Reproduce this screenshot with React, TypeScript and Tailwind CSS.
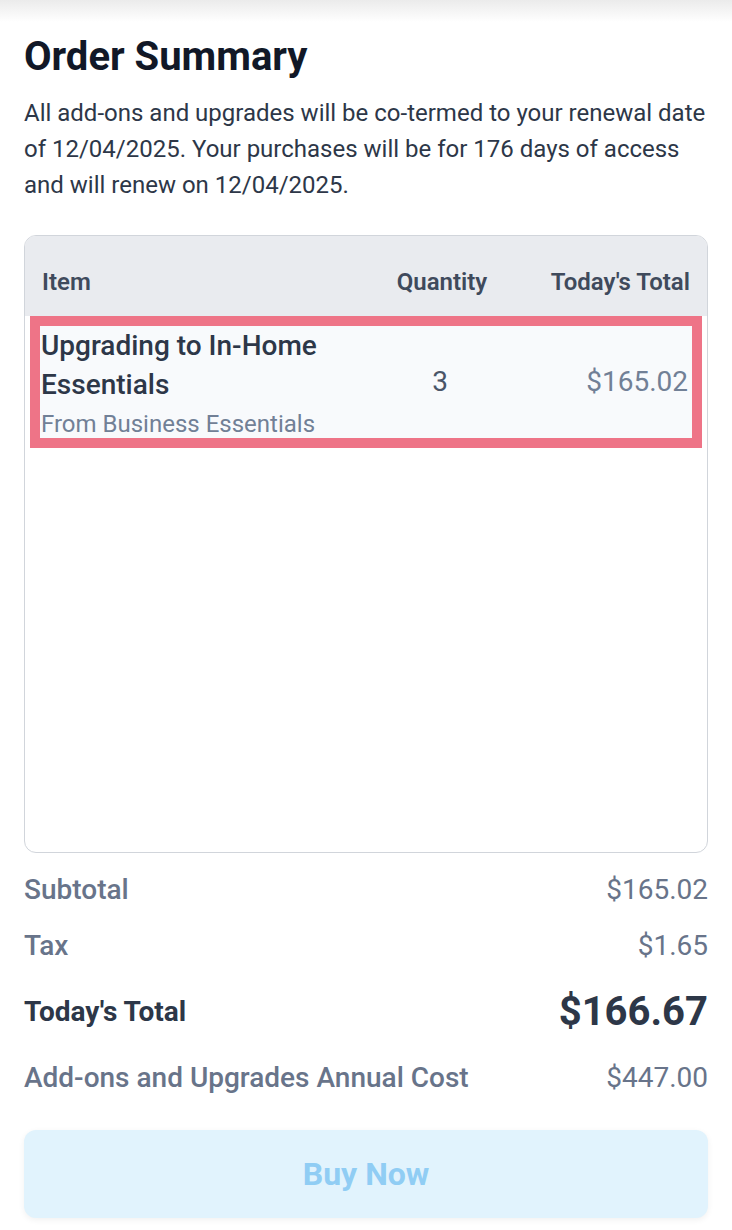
export default function App() {
  return (
    <div className="min-h-[1230px] bg-white font-['Roboto',sans-serif]">
      {/* header shadow from the page above */}
      <div className="h-[22px] bg-gradient-to-b from-[#ebebeb] to-white" />
      <div className="px-[24px]">
        <h1 className="mt-[11px] text-[40px] font-bold leading-[48px] text-[#111827]">Order Summary</h1>
        <p className="mt-[14px] text-[24px] leading-[36px] text-[#2d3748]">
          All add-ons and upgrades will be co-termed to your renewal date of 12/04/2025. Your purchases will be for 176 days of access and will renew on 12/04/2025.
        </p>

        <div className="mt-[32px] h-[618px] overflow-hidden rounded-[12px] border border-[#d1d5db]">
          <div className="grid h-[80px] grid-cols-[1fr_120px_188px] items-end bg-[#e9ebef] px-[17px] pb-[20px] text-[24px] font-semibold leading-[28px] text-[#3f4a5c]">
            <div>Item</div>
            <div className="text-center">Quantity</div>
            <div className="text-right">Today's Total</div>
          </div>
          <div className="mx-[5px] grid grid-cols-[1fr_120px_188px] items-center border-[10px] border-[#ee7487] bg-[#f8fafc] pl-[1px] pr-[4px]">
            <div>
              <div className="text-[28px] font-medium leading-[39px] text-[#2d3748]">Upgrading to In-Home Essentials</div>
              <div className="mt-[6px] text-[24px] leading-[28px] text-[#718096]">From Business Essentials</div>
            </div>
            <div className="text-center text-[28px] text-[#4a5568]">3</div>
            <div className="text-right text-[28px] text-[#718096]">$165.02</div>
          </div>
        </div>

        <div className="mt-[19px] flex flex-col text-[28px]">
          <div className="flex h-[36px] items-center justify-between">
            <span className="font-medium text-[#68748a]">Subtotal</span>
            <span className="text-[#68748a]">$165.02</span>
          </div>
          <div className="mt-[20px] flex h-[36px] items-center justify-between">
            <span className="font-medium text-[#68748a]">Tax</span>
            <span className="text-[#68748a]">$1.65</span>
          </div>
          <div className="mt-[24px] flex h-[48px] items-center justify-between">
            <span className="font-bold text-[#2d3748]">Today's Total</span>
            <span className="text-[40px] font-bold text-[#2d3748]">$166.67</span>
          </div>
          <div className="mt-[24px] flex h-[36px] items-center justify-between">
            <span className="font-medium text-[#68748a]">Add-ons and Upgrades Annual Cost</span>
            <span className="text-[#68748a]">$447.00</span>
          </div>
        </div>

        <button className="mt-[34px] flex h-[88px] w-full items-center justify-center rounded-[12px] bg-[#e1f3fd] text-[32px] font-bold text-[#90cdf4] shadow-[0_2px_6px_rgba(0,0,0,0.06)]">
          Buy Now
        </button>
      </div>
    </div>
  );
}
